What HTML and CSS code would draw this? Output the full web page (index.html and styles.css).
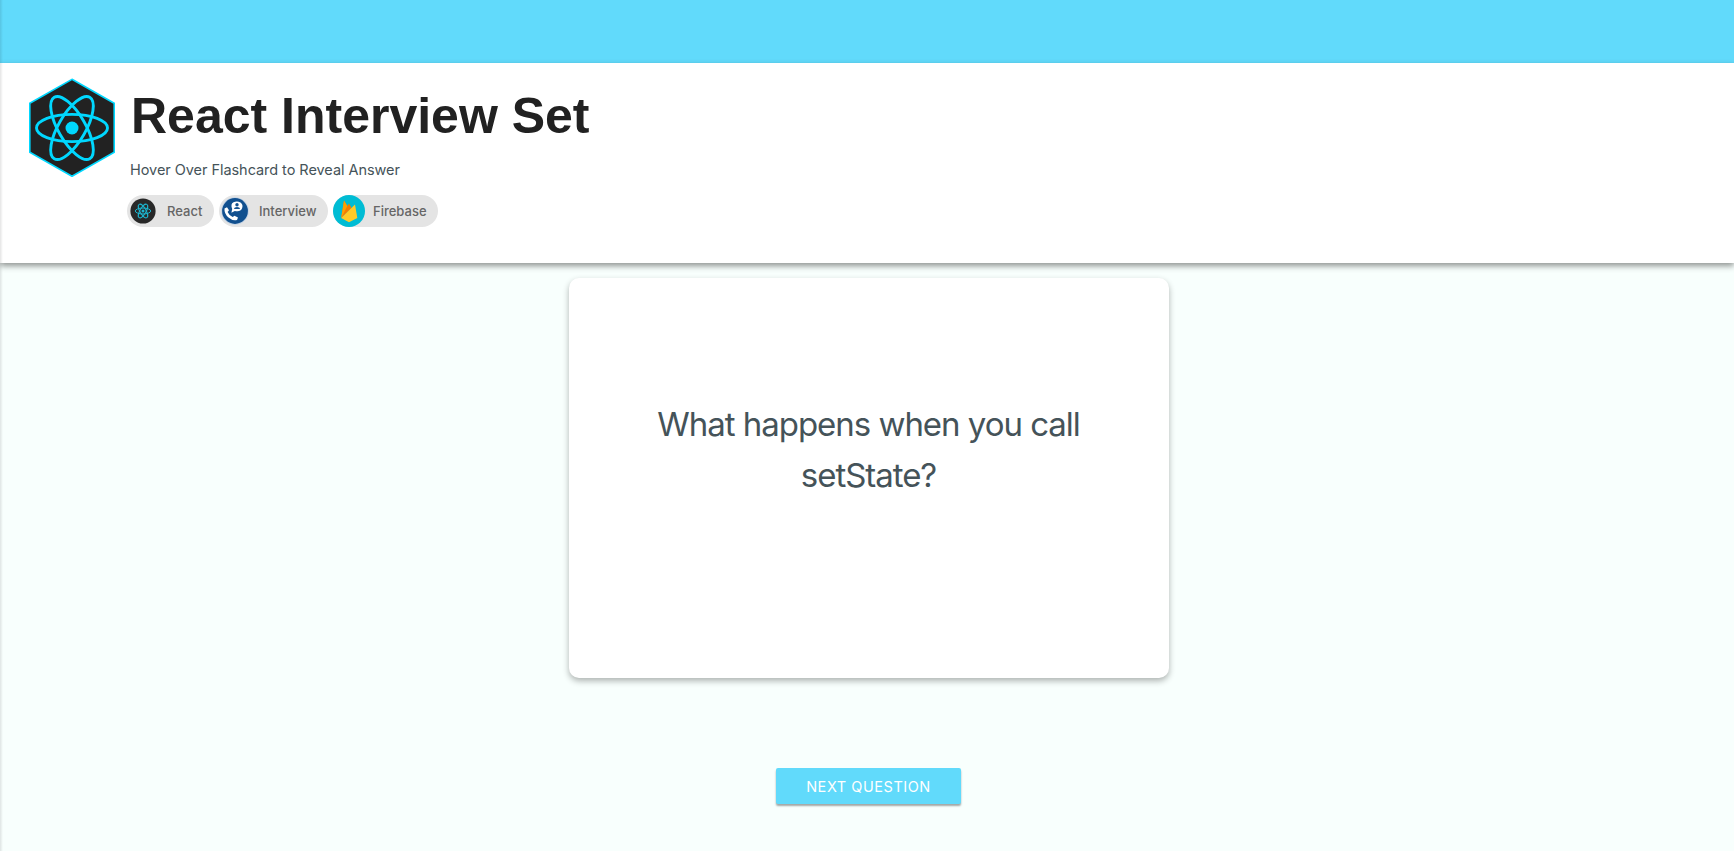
FILE: index.html
```html
<!DOCTYPE html>
<html lang="en">
<head>
<meta charset="utf-8">
<title>React Interview Set</title>
<link rel="stylesheet" href="styles.css">
</head>
<body>
<nav class="navbar"></nav>
<header class="set-header">
  <svg class="set-logo" viewBox="0 0 86 99">
    <path d="M43 1.300 85.200 25.300V74.300L43 98.300 .8 74.300V25.300Z" fill="#222" stroke="#00d8ff" stroke-width="1.6"/>
    <g fill="none" stroke="#00d8ff" stroke-width="2.9">
      <ellipse cx="43" cy="50" rx="35.5" ry="13.6"/>
      <ellipse cx="43" cy="50" rx="35.5" ry="13.6" transform="rotate(60 43 50)"/>
      <ellipse cx="43" cy="50" rx="35.5" ry="13.6" transform="rotate(120 43 50)"/>
    </g>
    <circle cx="43" cy="50" r="6.500" fill="#00d8ff"/>
  </svg>
  <div class="set-info">
    <h1 class="set-title">React Interview Set</h1>
    <p class="set-hint">Hover Over Flashcard to Reveal Answer</p>
    <div class="chips">
      <div class="chip chip-react">
        <svg class="chip-icon" viewBox="0 0 32 32">
          <circle cx="16" cy="16" r="12.6" fill="#282828"/>
          <g fill="none" stroke="#1cb5cf" stroke-width="1">
            <ellipse cx="16" cy="16" rx="7.700" ry="3"/>
            <ellipse cx="16" cy="16" rx="7.700" ry="3" transform="rotate(60 16 16)"/>
            <ellipse cx="16" cy="16" rx="7.700" ry="3" transform="rotate(120 16 16)"/>
          </g>
          <circle cx="16" cy="16" r="1.5" fill="#1cb5cf"/>
        </svg>
        <span>React</span>
      </div>
      <div class="chip chip-interview">
        <svg class="chip-icon" viewBox="0 0 32 32">
          <circle cx="16" cy="16" r="13.8" fill="#c3d3e4"/>
          <circle cx="16" cy="16" r="12.9" fill="#11508f"/>
          <path d="M12.400 17.800 13.200 14Q11.200 9 14.500 7.300Q18 5.500 21.500 7.500Q24.500 9.500 23 13.500Q21.300 17.300 15.800 15.900Z" fill="#fff"/>
          <circle cx="18" cy="9.700" r="1.700" fill="#11508f"/>
          <path d="M14.900 14Q15.200 11.900 18 11.900T21.100 14Z" fill="#11508f"/>
          <path d="M5.500 13.500 8 12.300 10 15.300 8.600 17Q10 20.300 13.700 22L15.500 20.700 19 22.500 18 25Q14 26.300 9.500 22.500T5.500 13.500Z" fill="#fff"/>
        </svg>
        <span>Interview</span>
      </div>
      <div class="chip chip-firebase">
        <svg class="chip-icon" viewBox="0 0 32 32">
          <circle cx="16" cy="16" r="16" fill="#00bcd4"/>
          <path d="M8.200 23 11 5.500 14.300 11 16 8.500 18.500 13Z" fill="#f57c00"/>
          <path d="M8.200 23 11 5.500 14.300 11Z" fill="#ffa000"/>
          <path d="M8.200 23 22 9.500 24.300 23 16 27.300Z" fill="#ffca28"/>
        </svg>
        <span>Firebase</span>
      </div>
    </div>
  </div>
</header>
<main class="study">
  <section class="flashcard">
    <p class="question">What happens when you call<br>setState?</p>
  </section>
  <button class="next-button" type="button">NEXT QUESTION</button>
</main>
<div class="edge-shadow"></div>
</body>
</html>
```
FILE: styles.css
```css
* { box-sizing: border-box; }
body {
  margin: 0;
  height: 851px;
  overflow: hidden;
  display: flex;
  flex-direction: column;
  background: #f8fffd;
  color: #455359;
  font-family: Inter, "Liberation Sans", sans-serif;
}
.navbar {
  height: 63px;
  flex: none;
  background: #61dafb;
}
.set-header {
  height: 200px;
  flex: none;
  display: flex;
  gap: 14px;
  padding: 15px 29px 0;
  background: #fff;
  box-shadow: 0 3px 6px rgba(0,0,0,.42);
}
.set-logo { width: 86px; height: 99px; flex: none; }
.set-info { display: flex; flex-direction: column; }
.set-title {
  margin: 10px 0 0 2px;
  font: bold 50px/56px "Liberation Sans", sans-serif;
  color: #212121;
  white-space: nowrap;
}
.set-hint {
  margin: 14px 0 0 1px;
  font-size: 14.5px;
  line-height: 24px;
  letter-spacing: -.05px;
}
.chips { display: flex; gap: 5px; margin: 13px 0 0 -2px; }
.chip {
  height: 32px;
  display: flex;
  align-items: center;
  gap: 8px;
  border-radius: 16px;
  background: #e4e4e4;
  color: #666;
  font-size: 13px;
  font-weight: 500;
}
.chip-react { width: 87px; }
.chip-interview { width: 109px; }
.chip-firebase { width: 105px; }
.chip-icon { width: 32px; height: 32px; flex: none; }
.study {
  flex: 1;
  display: flex;
  flex-direction: column;
  align-items: center;
  padding: 15px 0 0 3px;
}
.flashcard {
  width: 600px;
  height: 400px;
  padding-top: 121px;
  border-radius: 10px;
  background: #fff;
  box-shadow: 0 3px 6px rgba(0,0,0,.3);
  text-align: center;
}
.question {
  margin: 0;
  font-size: 33px;
  line-height: 51px;
  letter-spacing: -1.03px;
}
.next-button {
  width: 185px;
  height: 36px;
  margin-top: 90px;
  padding: 0;
  border: 0;
  border-radius: 2px;
  background: #61dafb;
  box-shadow: 0 2px 2px rgba(0,0,0,.35);
  color: #fff;
  font: 14.5px/37px Inter, sans-serif;
  letter-spacing: .55px;
}
.edge-shadow {
  position: absolute;
  inset: 0 auto 0 0;
  width: 3px;
  background: linear-gradient(90deg, rgba(0,0,0,.1), transparent);
}
```
